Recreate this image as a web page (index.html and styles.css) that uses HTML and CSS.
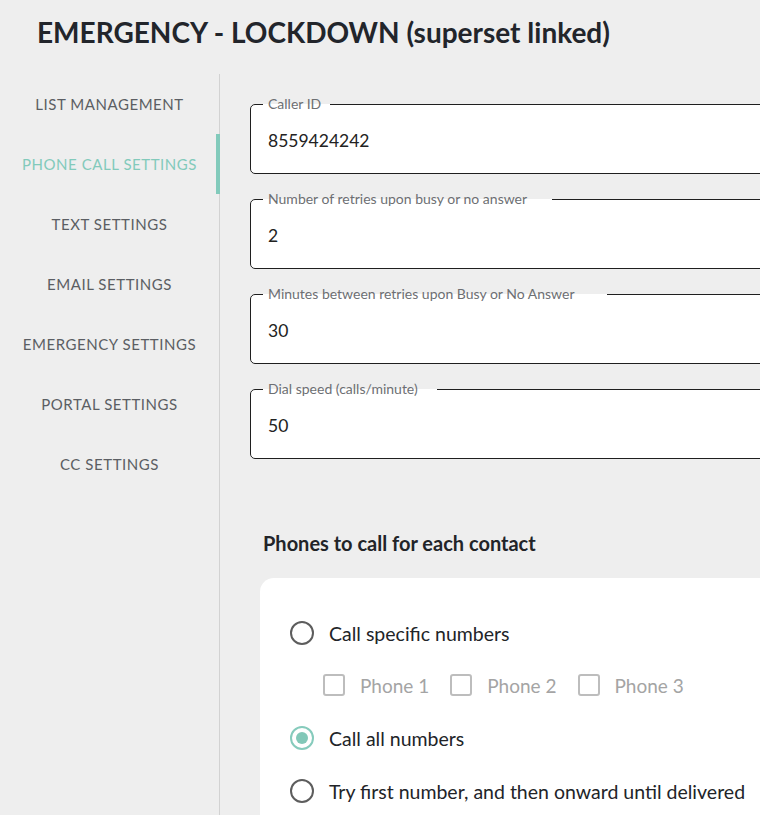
FILE: index.html
```html
<!DOCTYPE html>
<html>
<head>
<meta charset="utf-8">
<link rel="stylesheet" href="styles.css">
</head>
<body>
<h1 class="title">EMERGENCY - LOCKDOWN (superset linked)</h1>
<div class="layout">
  <nav class="sidebar">
    <a class="nav-item">LIST MANAGEMENT</a>
    <a class="nav-item active">PHONE CALL SETTINGS</a>
    <a class="nav-item">TEXT SETTINGS</a>
    <a class="nav-item">EMAIL SETTINGS</a>
    <a class="nav-item">EMERGENCY SETTINGS</a>
    <a class="nav-item">PORTAL SETTINGS</a>
    <a class="nav-item">CC SETTINGS</a>
  </nav>
  <main class="main">
    <fieldset class="field">
      <legend class="field-label notch-s">Caller ID</legend>
      <div class="field-value">8559424242</div>
    </fieldset>
    <fieldset class="field">
      <legend class="field-label notch-l">Number of retries upon busy or no answer</legend>
      <div class="field-value">2</div>
    </fieldset>
    <fieldset class="field">
      <legend class="field-label notch-xl">Minutes between retries upon Busy or No Answer</legend>
      <div class="field-value">30</div>
    </fieldset>
    <fieldset class="field">
      <legend class="field-label notch-m">Dial speed (calls/minute)</legend>
      <div class="field-value">50</div>
    </fieldset>

    <h2 class="section-title">Phones to call for each contact</h2>
    <div class="card">
      <div class="option">
        <span class="radio"></span>
        <span class="option-text">Call specific numbers</span>
      </div>
      <div class="checks">
        <div class="check"><span class="box"></span><span class="check-text">Phone 1</span></div>
        <div class="check"><span class="box"></span><span class="check-text">Phone 2</span></div>
        <div class="check"><span class="box"></span><span class="check-text">Phone 3</span></div>
      </div>
      <div class="option">
        <span class="radio checked"></span>
        <span class="option-text">Call all numbers</span>
      </div>
      <div class="option">
        <span class="radio"></span>
        <span class="option-text">Try first number, and then onward until delivered</span>
      </div>
    </div>
  </main>
</div>
</body>
</html>
```

FILE: styles.css
```css
html, body {
  margin: 0;
  padding: 0;
  overflow: hidden;
}
body {
  background: #eeeeee;
  font-family: Lato, "Liberation Sans", sans-serif;
  color: #222428;
  width: 760px;
  height: 815px;
}
.title {
  margin: 0;
  padding: 14px 0 0 37px;
  height: 74px;
  box-sizing: border-box;
  font-size: 28px;
  font-weight: 700;
  line-height: 36px;
  color: #22252b;
}
.layout {
  display: flex;
  align-items: stretch;
  height: 741px;
}
.sidebar {
  width: 219px;
  flex: none;
  border-right: 1px solid #d2d2d2;
  display: flex;
  flex-direction: column;
}
.nav-item {
  height: 60px;
  display: flex;
  align-items: center;
  justify-content: center;
  font-size: 15px;
  letter-spacing: 0.55px;
  color: #5b5e63;
  box-sizing: border-box;
}
.nav-item.active {
  color: #82cabb;
  border-right: 4px solid #82cabb;
  margin-right: -1px;
  padding-left: 3px;
}
.main {
  flex: none;
  width: 560px;
  padding: 22px 0 0 30px;
}
.field {
  margin: 0 0 17px 0;
  padding: 7px 17px 20px 17px;
  border: 1px solid #1f1f1f;
  border-radius: 5px;
  background: #ffffff;
  width: 560px;
  box-sizing: border-box;
}
.field-label {
  margin-left: -5px;
  padding: 0 9px 0 5px;
  font-size: 14px;
  line-height: 16px;
  color: #6d6f73;
}
.notch-s { padding-right: 9px; }
.notch-m { padding-right: 19px; }
.notch-l { padding-right: 25px; }
.notch-xl { padding-right: 32px; }
.field-value {
  font-size: 17.5px;
  line-height: 24px;
  color: #222;
  padding-top: 10px;
}
.section-title {
  margin: 72px 0 0 13px;
  font-size: 20px;
  font-weight: 700;
  line-height: 24px;
  color: #222428;
}
.card {
  margin: 23px 0 0 10px;
  background: #ffffff;
  border-radius: 14px;
  padding: 42px 0 0 30px;
  height: 300px;
}
.option {
  display: flex;
  align-items: center;
  height: 26px;
  gap: 15px;
  margin-bottom: 27px;
}
.radio {
  width: 24px;
  height: 24px;
  box-sizing: border-box;
  border: 2.5px solid #5d5d5d;
  border-radius: 50%;
  display: flex;
  align-items: center;
  justify-content: center;
  flex: none;
}
.radio.checked {
  border-color: #86cbbc;
}
.radio.checked::after {
  content: "";
  width: 12px;
  height: 12px;
  border-radius: 50%;
  background: #82c8b8;
}
.option-text {
  font-size: 19.5px;
  color: #222428;
}
.checks {
  display: flex;
  align-items: center;
  margin: -1px 0 27px 33px;
  height: 26px;
  gap: 21px;
}
.check {
  display: flex;
  align-items: center;
  gap: 15px;
}
.box {
  width: 22px;
  height: 22px;
  box-sizing: border-box;
  border: 2px solid #bdbdbd;
  border-radius: 3px;
  flex: none;
}
.check-text {
  font-size: 19px;
  color: #a4a4a4;
}
```
